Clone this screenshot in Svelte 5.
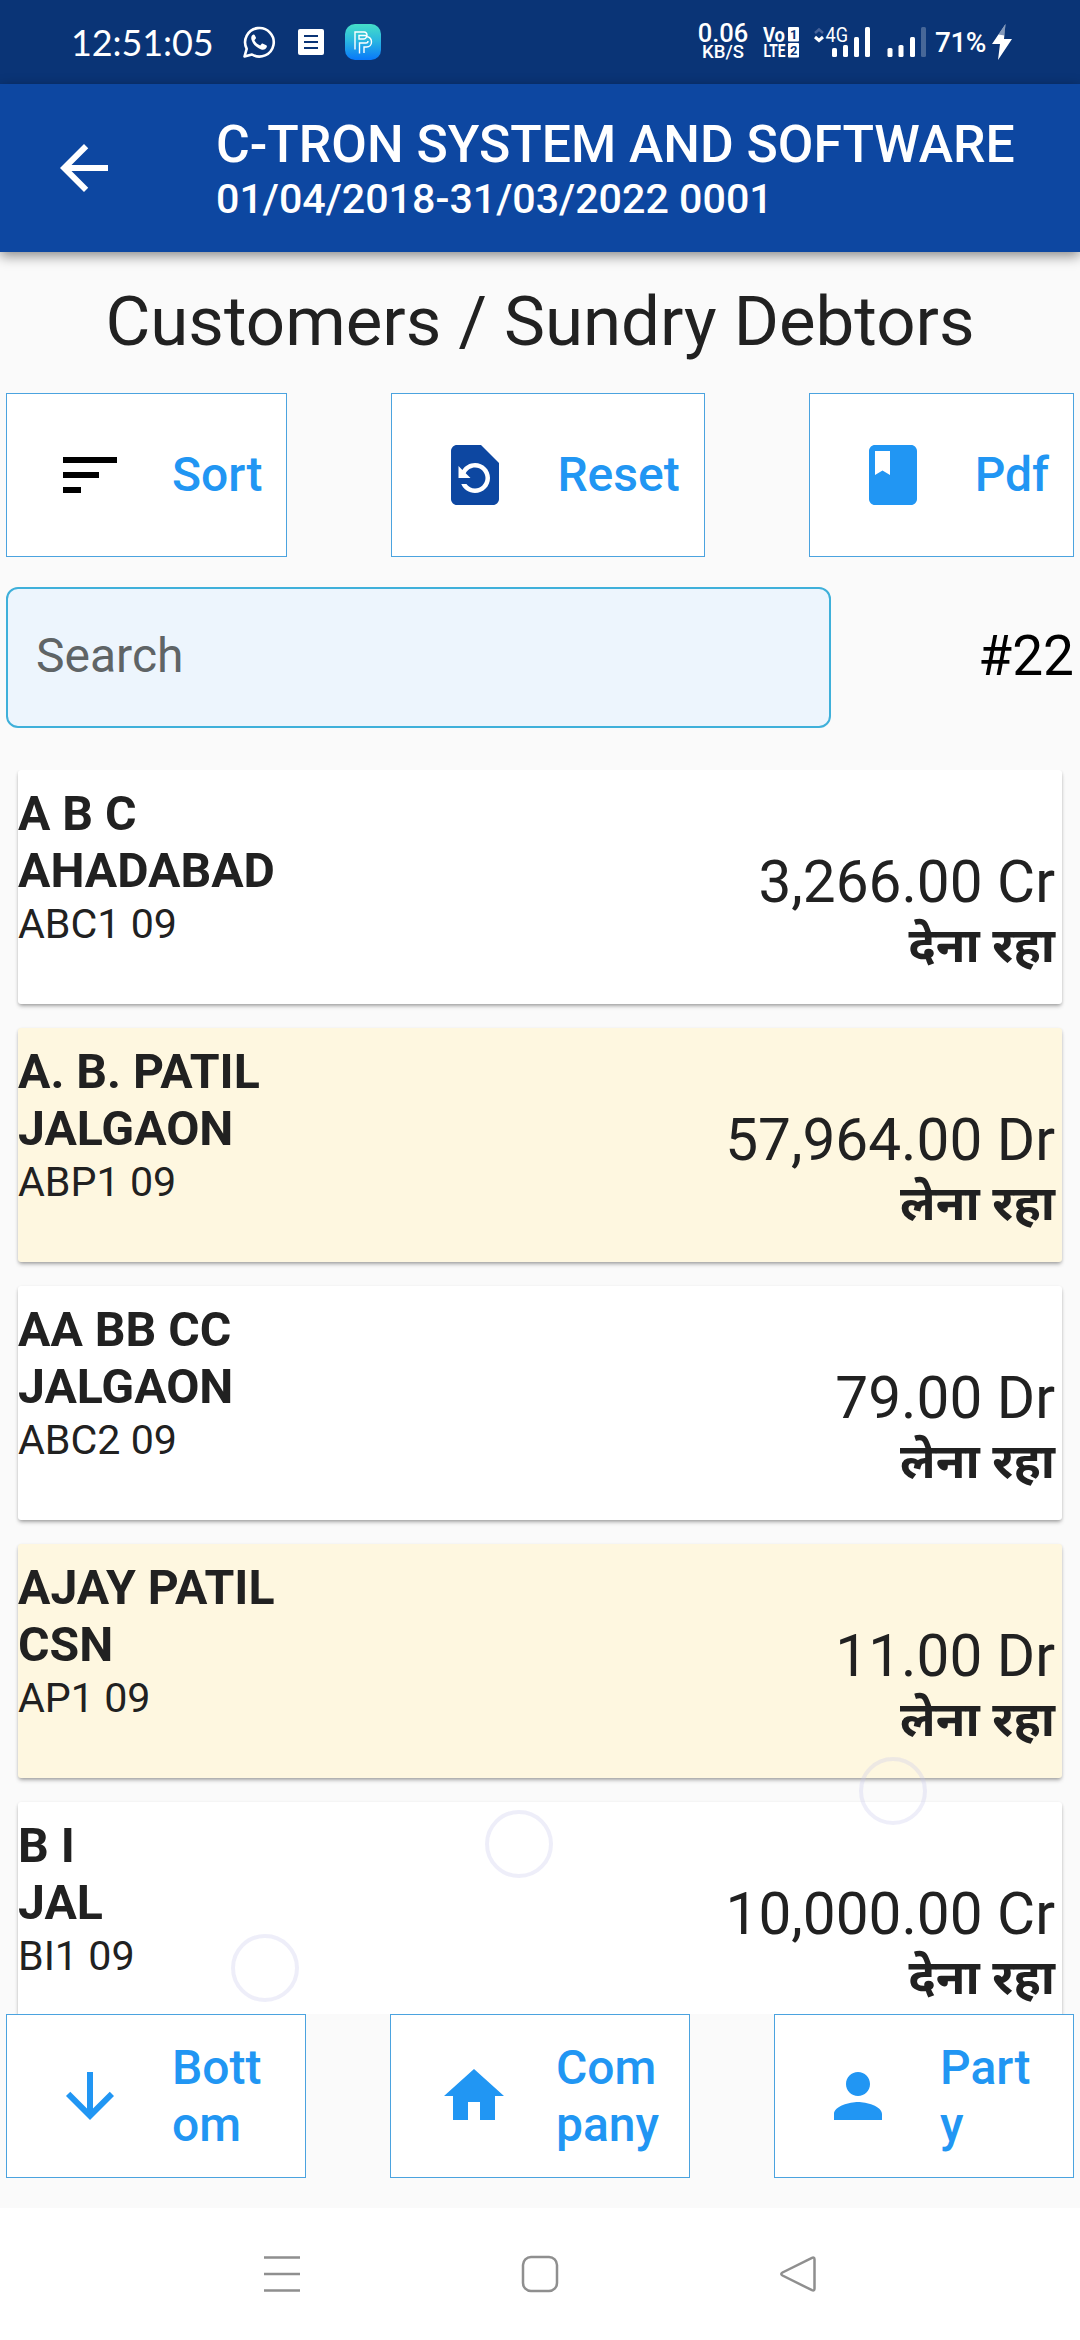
<script>
  const company = 'C-TRON SYSTEM AND SOFTWARE';
  const period = '01/04/2018-31/03/2022 0001';

  let search = '';
  const total = 22;

  const parties = [
    { name: 'A B C', city: 'AHADABAD', code: 'ABC1 09', amount: '3,266.00 Cr', note: 'देना रहा' },
    { name: 'A. B. PATIL', city: 'JALGAON', code: 'ABP1 09', amount: '57,964.00 Dr', note: 'लेना रहा' },
    { name: 'AA BB CC', city: 'JALGAON', code: 'ABC2 09', amount: '79.00 Dr', note: 'लेना रहा' },
    { name: 'AJAY PATIL', city: 'CSN', code: 'AP1 09', amount: '11.00 Dr', note: 'लेना रहा' },
    { name: 'B I', city: 'JAL', code: 'BI1 09', amount: '10,000.00 Cr', note: 'देना रहा' }
  ];

  const tools = [
    { label: 'Sort', color: '#000000', path: 'M3 18h6v-2H3v2zM3 6v2h18V6H3zm0 7h12v-2H3v2z' },
    {
      label: 'Reset',
      color: '#0d47a1',
      path: 'M14 2H6c-1.1 0-1.99.9-1.99 2L4 20c0 1.1.89 2 1.99 2H18c1.1 0 2-.9 2-2V8l-6-6zm-2 16c-2.05 0-3.81-1.24-4.58-3h1.71c.63.9 1.68 1.5 2.87 1.5 1.93 0 3.5-1.57 3.5-3.5S13.93 9.5 12 9.5c-1.35 0-2.52.78-3.1 1.9l1.6 1.6h-4V9l1.3 1.3C8.69 8.92 10.23 8 12 8c2.76 0 5 2.24 5 5s-2.24 5-5 5z'
    },
    {
      label: 'Pdf',
      color: '#2196f3',
      path: 'M18 2H6c-1.1 0-2 .9-2 2v16c0 1.1.9 2 2 2h12c1.1 0 2-.9 2-2V4c0-1.1-.9-2-2-2zM6 4h5v8l-2.5-1.5L6 12V4z'
    }
  ];

  const links = [
    { label: 'Bottom', path: 'M20 12l-1.410-1.410L13 16.170V4h-2v12.170l-5.580-5.590L4 12l8 8 8-8z' },
    { label: 'Company', path: 'M10 20v-6h4v6h5v-8h3L12 3 2 12h3v8z' },
    { label: 'Party', path: 'M12 12c2.210 0 4-1.790 4-4s-1.790-4-4-4-4 1.790-4 4 1.790 4 4 4zm0 2c-2.670 0-8 1.340-8 4v2h16v-2c0-2.660-5.330-4-8-4z' }
  ];
</script>

<div class="screen">
  <div class="status">
    <span class="clock">12:51:05</span>
    <svg class="whatsapp" width="34" height="34" viewBox="0 0 34 34" fill="none">
      <path d="M2.500 31.500l2.200-7.700A14.300 14.300 0 1 1 10 29.500z" stroke="#fff" stroke-width="2.600" stroke-linejoin="round" />
      <path d="M11.500 9.500c-2 .8-2.800 3-1.900 5.400 1.700 4.700 5 8 9.600 9.500 2.500.8 4.900-.3 5.600-2.400.2-.8.1-1.300-.5-1.700l-3.300-1.600c-.6-.3-1-.2-1.500.3l-1.300 1.500c-2.600-1-4.500-2.800-5.800-5.200l1.200-1.500c.4-.5.5-.9.2-1.500l-1.200-2.400c-.3-.4-.6-.6-1.100-.4z" fill="#fff" />
    </svg>
    <svg class="note" width="26" height="26" viewBox="0 0 26 26">
      <rect width="26" height="26" rx="2" fill="#fff" />
      <path d="M6 7h14M6 13h14M6 19h14" stroke="#0a3476" stroke-width="2" />
    </svg>
    <svg class="pp" width="36" height="36" viewBox="0 0 36 36" fill="none">
      <defs>
        <linearGradient id="pp" x1="0" y1="0" x2="0" y2="1">
          <stop offset="0" stop-color="#45dfc8" />
          <stop offset="0.45" stop-color="#2bb8e0" />
          <stop offset="1" stop-color="#0878fa" />
        </linearGradient>
      </defs>
      <rect width="36" height="36" rx="10" fill="url(#pp)" />
      <path d="M10 25.500V8h9a3 3 0 0 1 3 3.500H14v3.500h4.500a3 3 0 0 0 3-2.500c3 .5 5 2.700 5 5.500s-2 5-5 5h-2.500v6M14.500 29.500V19h6.500a2 2 0 0 0 2-2" stroke="#fff" stroke-width="1.400" />
    </svg>

    <div class="speed"><span>0.06</span><small>KB/S</small></div>
    <svg class="volte" width="37" height="32" viewBox="0 0 37 32" font-weight="700" fill="#fff">
      <text x="0" y="15.500" font-size="20" textLength="22" lengthAdjust="spacingAndGlyphs">Vo</text>
      <text x="0.500" y="31" font-size="19" textLength="22" lengthAdjust="spacingAndGlyphs">LTE</text>
      <rect x="25" y="1" width="11" height="14.500" rx="1" />
      <rect x="25" y="17" width="11" height="14.500" rx="1" />
      <text x="27" y="13" font-size="13" fill="#0a3476">1</text>
      <text x="27" y="29" font-size="13" fill="#0a3476">2</text>
    </svg>
    <svg class="signals" width="114" height="32" viewBox="0 0 114 32">
      <path d="M3 7l4-3.500L11 7" fill="none" stroke="#46639a" stroke-width="2.500" />
      <path d="M3 11l4 3.500 4-3.500" fill="none" stroke="#fff" stroke-width="3" />
      <text x="13.500" y="16" font-size="20" textLength="22.500" lengthAdjust="spacingAndGlyphs" fill="#fff">4G</text>
      <g fill="#fff">
        <rect x="20" y="22" width="5" height="9" rx="1.500" />
        <rect x="31" y="19" width="5" height="12" rx="1.500" />
        <rect x="42" y="11" width="5" height="20" rx="1.500" />
        <rect x="53" y="1" width="5" height="30" rx="1.500" />
        <rect x="75.500" y="22" width="5" height="9" rx="1.500" />
        <rect x="86.500" y="19" width="5" height="12" rx="1.500" />
        <rect x="98" y="11" width="5" height="20" rx="1.500" />
        <rect x="109" y="1" width="5" height="30" rx="1.500" opacity="0.25" />
      </g>
    </svg>
    <span class="battery">71%</span>
    <svg class="bolt" width="20" height="36" viewBox="0 0 20 36">
      <path d="M13.500 0L0 20h8L6 36l14-21h-8z" fill="#fff" />
      <path d="M13.500 0L6.500 10.500l6 1z" fill="#0a3476" opacity="0.500" />
    </svg>
  </div>

  <header>
    <svg width="72" height="72" viewBox="0 0 24 24" fill="#fff">
      <path d="M20 11H7.830l5.590-5.590L12 4l-8 8 8 8 1.410-1.410L7.830 13H20v-2z" />
    </svg>
    <div class="titles">
      <div class="company">{company}</div>
      <div class="period">{period}</div>
    </div>
  </header>

  <h1>Customers / Sundry Debtors</h1>

  <div class="row tools">
    {#each tools as tool}
      <button>
        <svg width="72" height="72" viewBox="0 0 24 24" fill={tool.color}><path d={tool.path} /></svg>
        <span>{tool.label}</span>
      </button>
    {/each}
  </div>

  <div class="row search">
    <input type="text" placeholder="Search" bind:value={search} />
    <span class="count">#{total}</span>
  </div>

  <div class="list">
    {#each parties as party, i}
      <div class="card" class:alt={i % 2 === 1}>
        <div class="info">
          <strong>{party.name}</strong>
          <strong>{party.city}</strong>
          <span>{party.code}</span>
        </div>
        <div class="balance">
          <span class="amount">{party.amount}</span>
          <span class="hindi">{party.note}</span>
        </div>
      </div>
    {/each}
  </div>

  <div class="row links">
    {#each links as link}
      <button>
        <svg width="72" height="72" viewBox="0 0 24 24" fill="#2196f3"><path d={link.path} /></svg>
        <span>{link.label}</span>
      </button>
    {/each}
  </div>

  <nav>
    <svg width="38" height="38" viewBox="0 0 38 38"><path d="M1 2.500h36M1 19h36M1 35.500h36" /></svg>
    <svg width="38" height="38" viewBox="0 0 38 38"><rect x="2" y="2" width="34" height="34" rx="8" /></svg>
    <svg width="38" height="38" viewBox="0 0 38 38"><path d="M33 2.800L3.500 17.500q-2.500 1.500 0 3L33 35.200q2.500 1 2.500-1.700v-29q0-2.700-2.500-1.700z" /></svg>
  </nav>

  <!-- faint floating bubbles over the list -->
  <i class="bubble b1"></i>
  <i class="bubble b2"></i>
  <i class="bubble b3"></i>
</div>

<style>
  :global(body) {
    background: #fafafa;
  }

  .screen {
    position: relative;
    display: flex;
    flex-direction: column;
    width: 1080px;
    height: 2340px;
    overflow: hidden;
    background: #fafafa;
    color: #212121;
    font-family: Roboto, 'Noto Sans', sans-serif;
  }

  .status {
    display: flex;
    align-items: center;
    flex: none;
    height: 84px;
    padding: 0 68px 0 71px;
    box-sizing: border-box;
    background: #0a3476;
    color: #fff;
  }

  .clock {
    width: 171px;
    font-family: Lato, sans-serif;
    font-size: 36px;
    letter-spacing: -0.1px;
    white-space: nowrap;
  }

  .note {
    margin-left: 22px;
  }

  .pp {
    margin-left: 21px;
  }

  .speed {
    display: flex;
    flex-direction: column;
    align-items: center;
    width: 54px;
    margin-left: auto;
    font-size: 25.5px;
    font-weight: 500;
    line-height: 21px;
  }

  .speed small {
    font-size: 18.5px;
    line-height: 17px;
  }

  .volte {
    margin-left: 13px;
    overflow: visible;
  }

  .signals {
    margin-left: 12px;
    overflow: visible;
  }

  .battery {
    width: 52px;
    margin-left: 9px;
    font-size: 28px;
    font-weight: 500;
    letter-spacing: -0.5px;
  }

  .bolt {
    margin-left: 5px;
  }

  header {
    z-index: 1;
    display: flex;
    align-items: center;
    flex: none;
    height: 168px;
    padding-left: 48px;
    background: #0d47a1;
    color: #fff;
    font-weight: 500;
    box-shadow: 0 4px 12px rgba(0, 0, 0, 0.45);
  }

  .titles {
    margin-left: 96px;
    padding-top: 2px;
    white-space: nowrap;
  }

  .company {
    font-size: 51.7px;
    line-height: 60px;
  }

  .period {
    font-size: 41.2px;
    line-height: 48px;
  }

  h1 {
    margin: 25px 0 26px;
    font-size: 69px;
    font-weight: 400;
    line-height: 90px;
    text-align: center;
  }

  .row {
    display: flex;
    justify-content: space-between;
    flex: none;
    padding: 0 6px;
  }

  button {
    display: flex;
    align-items: center;
    height: 164px;
    padding: 0 24px 0 47px;
    box-sizing: border-box;
    border: 1px solid #4ba3df;
    background: #fff;
    color: #2196f3;
    font-family: inherit;
    font-size: 48px;
    font-weight: 500;
    line-height: 57px;
    text-align: left;
  }

  button svg {
    flex: none;
  }

  button span {
    margin-left: 46px;
  }

  .tools span {
    padding-bottom: 2px;
  }

  .search {
    align-items: center;
    margin: 30px 0 42px;
  }

  .search input {
    width: 825px;
    height: 141px;
    padding: 0 28px 4px;
    box-sizing: border-box;
    border: 2px solid #3fb0da;
    border-radius: 12px;
    background: #edf5fd;
    font-family: inherit;
    font-size: 48px;
    outline: none;
  }

  .search input::placeholder {
    color: #5f6466;
    opacity: 1;
  }

  .count {
    padding-bottom: 3px;
    color: #000;
    font-size: 55px;
  }

  .list {
    display: flex;
    flex-direction: column;
    gap: 24px;
    height: 1244px;
    padding: 0 18px;
    overflow: hidden;
  }

  .card {
    display: flex;
    justify-content: space-between;
    flex: none;
    height: 234px;
    box-sizing: border-box;
    border-radius: 3px;
    background: #fff;
    box-shadow: 0 3px 4px -1px rgba(0, 0, 0, 0.3), 0 1px 3px rgba(0, 0, 0, 0.12);
  }

  .card.alt {
    background: #fef7e0;
  }

  .info {
    display: flex;
    flex-direction: column;
    padding-top: 15px;
    font-size: 41.2px;
    line-height: 50px;
  }

  .info strong {
    font-size: 48.2px;
    font-weight: 700;
    line-height: 57px;
  }

  .balance {
    display: flex;
    flex-direction: column;
    align-items: flex-end;
    padding: 77px 7px 0 0;
  }

  .amount {
    font-size: 58.5px;
    line-height: 70px;
  }

  .hindi {
    margin-top: 5px;
    font-family: 'Noto Sans Devanagari', 'Noto Sans', sans-serif;
    font-size: 48.3px;
    font-weight: 700;
    line-height: 58px;
  }

  .links button {
    width: 300px;
  }

  .links span {
    width: 106px;
    word-break: break-all;
  }

  nav {
    display: flex;
    justify-content: center;
    align-items: center;
    gap: 220px;
    height: 132px;
    margin-top: 30px;
    background: #fff;
  }

  nav svg {
    fill: none;
    stroke: #8f8f8f;
    stroke-width: 2.5px;
  }

  .bubble {
    position: absolute;
    z-index: 2;
    width: 68px;
    height: 68px;
    box-sizing: border-box;
    border: 4px solid rgba(200, 200, 235, 0.3);
    border-radius: 50%;
  }

  .b1 {
    left: 859px;
    top: 1757px;
  }

  .b2 {
    left: 485px;
    top: 1810px;
  }

  .b3 {
    left: 231px;
    top: 1934px;
  }
</style>
